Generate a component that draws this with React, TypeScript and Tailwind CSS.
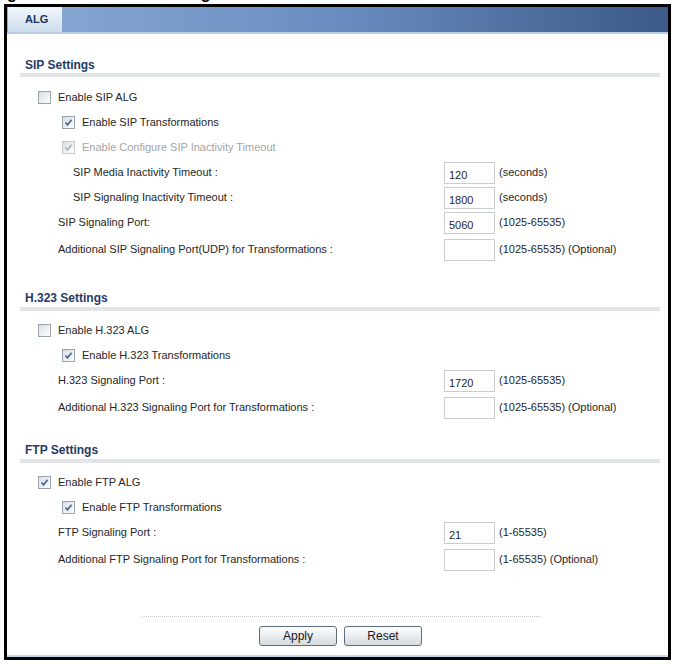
import React, { FC } from 'react';

type TRow =
  | { kind: 'check'; level: 1 | 2; label: string; checked: boolean; disabled?: boolean }
  | { kind: 'field'; indent: number; label: string; value: string; hint: string; gap?: boolean };

interface TSection {
  title: string;
  top: string;
  rows: TRow[];
}

const sections: TSection[] = [
  {
    title: 'SIP Settings',
    top: 'mt-[23px]',
    rows: [
      { kind: 'check', level: 1, label: 'Enable SIP ALG', checked: false },
      { kind: 'check', level: 2, label: 'Enable SIP Transformations', checked: true },
      {
        kind: 'check', level: 2, label: 'Enable Configure SIP Inactivity Timeout', checked: true, disabled: true,
      },
      {
        kind: 'field', indent: 53, label: 'SIP Media Inactivity Timeout :', value: '120', hint: '(seconds)',
      },
      {
        kind: 'field', indent: 53, label: 'SIP Signaling Inactivity Timeout :', value: '1800', hint: '(seconds)',
      },
      {
        kind: 'field', indent: 38, label: 'SIP Signaling Port:', value: '5060', hint: '(1025-65535)',
      },
      {
        kind: 'field',
        indent: 38,
        label: 'Additional SIP Signaling Port(UDP) for Transformations :',
        value: '',
        hint: '(1025-65535) (Optional)',
        gap: true,
      },
    ],
  },
  {
    title: 'H.323 Settings',
    top: 'mt-[28px]',
    rows: [
      { kind: 'check', level: 1, label: 'Enable H.323 ALG', checked: false },
      { kind: 'check', level: 2, label: 'Enable H.323 Transformations', checked: true },
      {
        kind: 'field', indent: 38, label: 'H.323 Signaling Port :', value: '1720', hint: '(1025-65535)',
      },
      {
        kind: 'field',
        indent: 38,
        label: 'Additional H.323 Signaling Port for Transformations :',
        value: '',
        hint: '(1025-65535) (Optional)',
        gap: true,
      },
    ],
  },
  {
    title: 'FTP Settings',
    top: 'mt-[22px]',
    rows: [
      { kind: 'check', level: 1, label: 'Enable FTP ALG', checked: true },
      { kind: 'check', level: 2, label: 'Enable FTP Transformations', checked: true },
      {
        kind: 'field', indent: 38, label: 'FTP Signaling Port :', value: '21', hint: '(1-65535)',
      },
      {
        kind: 'field',
        indent: 38,
        label: 'Additional FTP Signaling Port for Transformations :',
        value: '',
        hint: '(1-65535) (Optional)',
        gap: true,
      },
    ],
  },
];

const CheckBox: FC<{ checked: boolean; disabled?: boolean }> = ({ checked, disabled }) => (
  <span
    className={`inline-flex w-[13px] h-[13px] shrink-0 items-center justify-center border bg-linear-to-br from-[#d9dde2] to-white ${
      disabled ? 'border-[#c6cbd1]' : 'border-[#9ba4ae]'
    }`}
  >
    {checked && (
      <svg width="9" height="9" viewBox="0 0 9 9">
        <path
          d="M1.5 4.5 L3.5 6.8 L7.6 1.8"
          fill="none"
          stroke={disabled ? '#a9b5c7' : '#4d6c9c'}
          strokeWidth="1.8"
        />
      </svg>
    )}
  </span>
);

const Row: FC<{ row: TRow }> = ({ row }) => {
  if (row.kind === 'check') {
    return (
      <div
        className={`flex items-center h-[25px] gap-[7px] ${row.level === 1 ? 'pl-[18px]' : 'pl-[42px]'}`}
      >
        <CheckBox checked={row.checked} disabled={row.disabled} />
        <span className={row.disabled ? 'text-[#a3a3a3]' : 'text-[#262626]'}>{row.label}</span>
      </div>
    );
  }

  return (
    <div className={`flex items-center h-[25px] ${row.gap ? 'mt-[2px]' : ''}`}>
      <div className={`w-[424px] ${row.indent === 53 ? 'pl-[53px]' : 'pl-[38px]'}`}>{row.label}</div>
      <div className="w-[51px] h-[22px] border border-[#c9cdd2] bg-white pl-[4px] pt-[6px] leading-[13px]">
        {row.value}
      </div>
      <div className="ml-[4px]">{row.hint}</div>
    </div>
  );
};

const Section: FC<{ section: TSection; first: boolean }> = ({ section, first }) => (
  <div className={`ml-[13px] mr-[8px] ${section.top}`}>
    <div className="h-[16px] pl-[5px] text-[12px] leading-[16px] font-bold text-[#1f3b66]">
      {section.title}
    </div>
    <div className={`h-[4px] bg-[#e1e4e8] ${first ? '' : 'mt-[1px]'}`} />
    <div className={first ? 'mt-[8px]' : 'mt-[7px]'}>
      {section.rows.map((row) => (
        <Row key={row.label} row={row} />
      ))}
    </div>
  </div>
);

const App: FC = () => (
  <div className="w-[673px] h-[664px] bg-white font-['Liberation_Sans',Arial,sans-serif] text-[11px] text-[#262626] overflow-hidden">
    {/* descenders of the caption line above */}
    <div className="h-[4px] overflow-hidden flex text-[16px] leading-[16px] font-bold text-black">
      <span className="-mt-[14px] ml-[7px]">g</span>
      <span className="-mt-[14px] ml-[184px]">g</span>
    </div>

    <div className="ml-[4px] w-[667px] border-[3px] border-black">
      <div className="flex h-[25px] bg-linear-to-r from-[#8aaad4] via-[#6a8dc1] to-[#3c5987]">
        <div className="ml-[1px] w-[54px] bg-linear-to-b from-[#f1f6fc] to-[#cddded] pl-[17px] pt-[4px] text-[11px] leading-[16px] font-bold text-[#1d3560]">
          ALG
        </div>
      </div>
      <div className="h-[2px] bg-[#b9cde8]" />

      {sections.map((section, index) => (
        <Section key={section.title} section={section} first={index === 0} />
      ))}

      <div className="mt-[44px] ml-[135px] w-[399px] border-t border-dotted border-[#c4c4c4]" />

      <div className="mt-[9px] ml-[252px] flex gap-[7px]">
        {['Apply', 'Reset'].map((label) => (
          <button
            key={label}
            type="button"
            className="w-[78px] h-[20px] rounded-[3px] border border-[#5d6d80] bg-linear-to-b from-white to-[#d6dade] text-[12px] leading-[18px] text-[#1a1a1a]"
          >
            {label}
          </button>
        ))}
      </div>

      <div className="h-[9px]" />
      <div className="h-[2px] bg-[#c8d6ea]" />
    </div>
  </div>
);

export default App;
